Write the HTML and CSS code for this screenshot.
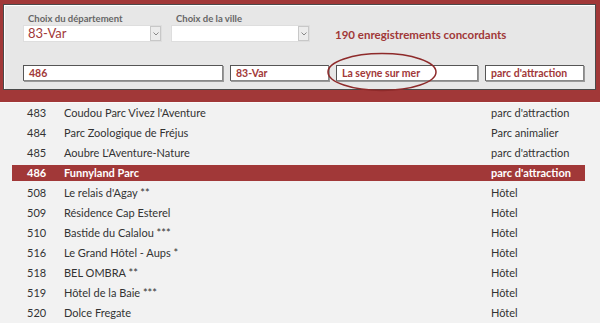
FILE: index.html
```html
<!DOCTYPE html>
<html lang="fr">
<head>
<meta charset="utf-8">
<link rel="stylesheet" href="styles.css">
</head>
<body>
<div class="header">
  <div class="panel">
    <div class="top">
      <div class="field">
        <div class="label">Choix du département</div>
        <div class="combo"><span class="combo-val">83-Var</span><span class="combo-btn"><svg width="6" height="4" viewBox="0 0 6 4"><path d="M0.5 0.5 L3 3 L5.5 0.5" fill="none" stroke="#888" stroke-width="1"/></svg></span></div>
      </div>
      <div class="field">
        <div class="label">Choix de la ville</div>
        <div class="combo"><span class="combo-val"></span><span class="combo-btn"><svg width="6" height="4" viewBox="0 0 6 4"><path d="M0.5 0.5 L3 3 L5.5 0.5" fill="none" stroke="#888" stroke-width="1"/></svg></span></div>
      </div>
      <div class="count">190 enregistrements concordants</div>
    </div>
    <div class="boxes">
      <div class="box b1">486</div>
      <div class="box b2">83-Var</div>
      <div class="box b3">La seyne sur mer</div>
      <div class="box b4">parc d'attraction</div>
    </div>
    <svg class="ellipse" width="112" height="40" viewBox="0 0 112 40"><ellipse cx="56" cy="20" rx="54" ry="18.5" fill="none" stroke="#8e2a2a" stroke-width="1.5"/></svg>
  </div>
</div>
<div class="list">
  <div class="row"><div class="cell"><span class="num">483</span><span class="name">Coudou Parc Vivez l'Aventure</span><span class="type">parc d'attraction</span></div></div>
  <div class="row"><div class="cell"><span class="num">484</span><span class="name">Parc Zoologique de Fréjus</span><span class="type">Parc animalier</span></div></div>
  <div class="row"><div class="cell"><span class="num">485</span><span class="name">Aoubre L'Aventure-Nature</span><span class="type">parc d'attraction</span></div></div>
  <div class="row sel"><div class="cell"><span class="num">486</span><span class="name">Funnyland Parc</span><span class="type">parc d'attraction</span></div></div>
  <div class="row"><div class="cell"><span class="num">508</span><span class="name">Le relais d'Agay **</span><span class="type">Hôtel</span></div></div>
  <div class="row"><div class="cell"><span class="num">509</span><span class="name">Résidence Cap Esterel</span><span class="type">Hôtel</span></div></div>
  <div class="row"><div class="cell"><span class="num">510</span><span class="name">Bastide du Calalou ***</span><span class="type">Hôtel</span></div></div>
  <div class="row"><div class="cell"><span class="num">516</span><span class="name">Le Grand Hôtel - Aups *</span><span class="type">Hôtel</span></div></div>
  <div class="row"><div class="cell"><span class="num">518</span><span class="name">BEL OMBRA **</span><span class="type">Hôtel</span></div></div>
  <div class="row"><div class="cell"><span class="num">519</span><span class="name">Hôtel de la Baie ***</span><span class="type">Hôtel</span></div></div>
  <div class="row"><div class="cell"><span class="num">520</span><span class="name">Dolce Fregate</span><span class="type">Hôtel</span></div></div>
</div>
</body>
</html>
```

FILE: styles.css
```css
* { box-sizing: border-box; }
html, body { margin: 0; padding: 0; }
body {
  width: 600px;
  height: 323px;
  overflow: hidden;
  background: #f2f2f2;
  font-family: Lato, "Open Sans", sans-serif;
  color: #333;
}
.header {
  background: #a13838;
  padding: 4px 4px 12px 3px;
  border-bottom: 1px solid #fafafa;
}
.panel {
  position: relative;
  height: 86px;
  background: #e7e7e7;
  border: 1px solid #4a4a4a;
  box-shadow: inset 1px 1px 0 #fff;
  padding: 8px 0 0 19px;
}
.top {
  display: flex;
  align-items: flex-start;
}
.field {
  width: 148px;
  display: flex;
  flex-direction: column;
}
.label {
  font-size: 9.5px;
  font-weight: 700;
  color: #666;
  height: 12px;
  line-height: 12px;
  padding-left: 5px;
}
.combo {
  width: 139px;
  height: 17px;
  background: #fff;
  border: 1px solid #dedede;
  display: flex;
  align-items: stretch;
}
.combo-val {
  flex: 1;
  font-size: 13px;
  line-height: 15px;
  color: #a13838;
  padding-left: 4px;
}
.combo-btn {
  width: 11px;
  border: 1px solid #c8c8c8;
  background: #ececec;
  display: flex;
  align-items: center;
  justify-content: center;
}
.count {
  margin-left: 16px;
  margin-top: 15px;
  font-size: 11.5px;
  font-weight: 700;
  color: #a13838;
}
.boxes {
  display: flex;
  margin-top: 23px;
}
.box {
  height: 16px;
  background: #fff;
  border: 1px solid #555;
  border-right-color: #888;
  border-bottom-color: #888;
  box-shadow: 1px 1px 0 #999;
  font-size: 10.5px;
  font-weight: 700;
  line-height: 14px;
  color: #a13838;
  padding-left: 5px;
}
.b1 { width: 200px; }
.b2 { width: 99px; margin-left: 7px; }
.b3 { width: 142px; margin-left: 7px; }
.b4 { width: 99px; margin-left: 7px; }
.ellipse {
  position: absolute;
  left: 322px;
  top: 47px;
}
.row {
  height: 20px;
  padding: 2px 0 2px 12px;
}
.cell {
  width: 573px;
  height: 16px;
  display: flex;
  font-size: 11px;
  line-height: 16px;
  color: #333;
}
.num { width: 52px; padding-left: 15px; }
.name { width: 427px; }
.type { flex: 1; }
.sel .cell {
  background: #a13838;
  color: #fff;
  font-weight: 700;
}
```
